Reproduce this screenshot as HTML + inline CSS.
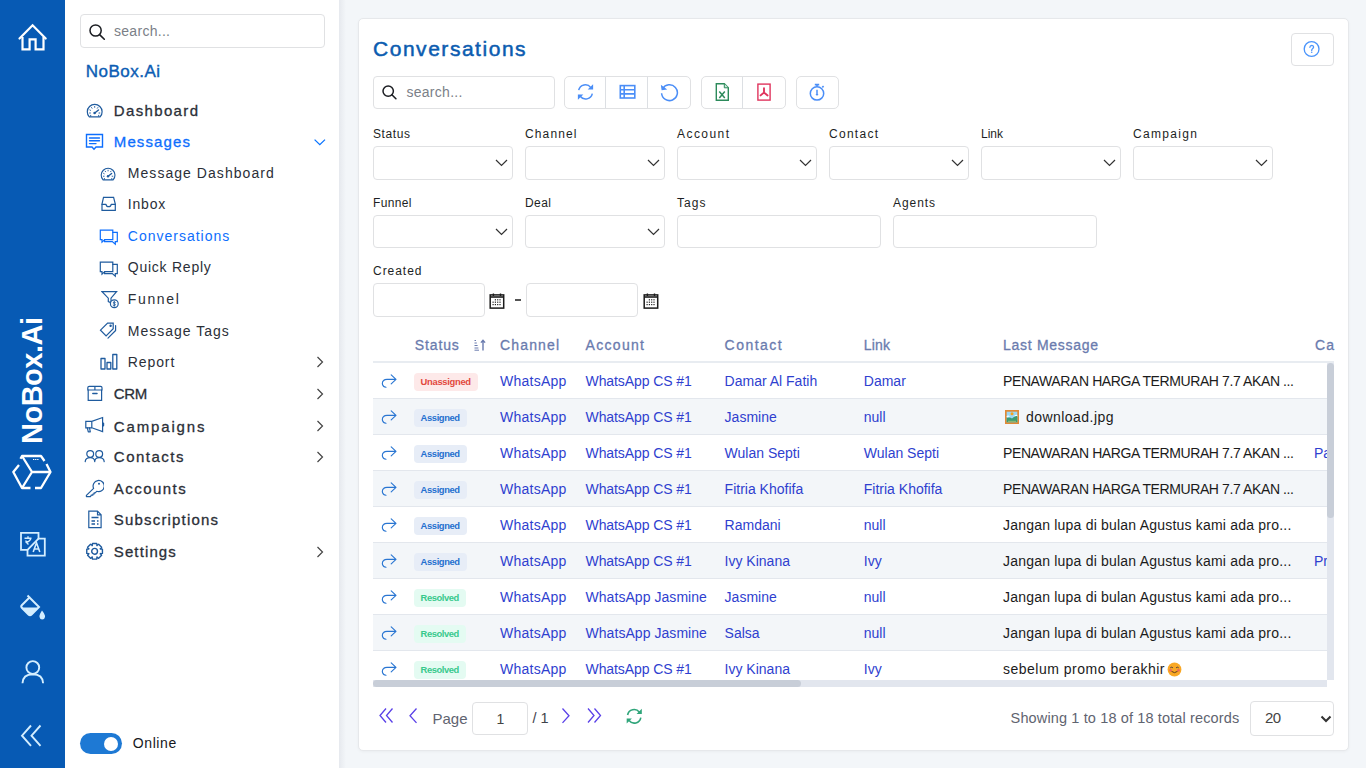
<!DOCTYPE html>
<html><head><meta charset="utf-8"><title>Conversations</title>
<style>
html,body{margin:0;padding:0;}
body{width:1366px;height:768px;overflow:hidden;position:relative;background:#f3f6f9;font-family:"Liberation Sans",sans-serif;}
.a{position:absolute;display:block;}
.t{position:absolute;white-space:pre;font-family:"Liberation Sans",sans-serif;}
</style></head><body>
<div class="a" style="left:0px;top:0px;width:65px;height:768px;box-sizing:border-box;border-radius:0px;background:#075ab4;"></div>
<div class="a" style="left:65px;top:0px;width:274px;height:768px;box-sizing:border-box;border-radius:0px;background:#fff;"></div>
<div class="a" style="left:339px;top:0;width:7px;height:768px;background:linear-gradient(90deg,#e6e9ee,#f3f6f9)"></div>
<div class="a" style="left:358px;top:18px;width:991px;height:733px;box-sizing:border-box;border:1px solid #e6e8eb;border-radius:5px;background:#fff;box-shadow:0 1px 3px rgba(0,0,0,0.04)"></div>
<div class="a" style="left:80px;top:14px;width:245px;height:34px;box-sizing:border-box;border:1px solid #e0e1e3;border-radius:4px;background:#fff;"></div>
<div class="t" style="left:114.00px;top:23.65px;font-size:14px;line-height:14px;color:#7b7f88;font-weight:400;letter-spacing:0.287px;">search...</div>
<div class="t" style="left:85.80px;top:63.31px;font-size:17px;line-height:17px;color:#0c5db4;font-weight:400;letter-spacing:0.475px;-webkit-text-stroke:0.4px #0c5db4">NoBox.Ai</div>
<div class="t" style="left:113.80px;top:103.40px;font-size:15px;line-height:15px;color:#2b2f38;font-weight:400;letter-spacing:1.351px;-webkit-text-stroke:0.3px #2b2f38">Dashboard</div>
<div class="t" style="left:113.80px;top:134.20px;font-size:15px;line-height:15px;color:#0d6efd;font-weight:400;letter-spacing:1.118px;-webkit-text-stroke:0.3px #0d6efd">Messages</div>
<svg class="a" style="left:312px;top:137.9px;" width="14" height="8" viewBox="0 0 14 8"><path d="M2.6 1.6 L7.8 6.6 L13 1.6" fill="none" stroke="#0a74ff" stroke-width="1.3"/></svg>
<div class="t" style="left:127.80px;top:166.45px;font-size:14px;line-height:14px;color:#2b2f38;font-weight:400;letter-spacing:1.045px;">Message Dashboard</div>
<div class="t" style="left:127.80px;top:197.35px;font-size:14px;line-height:14px;color:#2b2f38;font-weight:400;letter-spacing:0.812px;">Inbox</div>
<div class="t" style="left:127.80px;top:228.65px;font-size:14px;line-height:14px;color:#0d6efd;font-weight:400;letter-spacing:1.000px;">Conversations</div>
<div class="t" style="left:127.80px;top:260.05px;font-size:14px;line-height:14px;color:#2b2f38;font-weight:400;letter-spacing:0.753px;">Quick Reply</div>
<div class="t" style="left:127.80px;top:292.25px;font-size:14px;line-height:14px;color:#2b2f38;font-weight:400;letter-spacing:1.637px;">Funnel</div>
<div class="t" style="left:127.80px;top:323.55px;font-size:14px;line-height:14px;color:#2b2f38;font-weight:400;letter-spacing:0.999px;">Message Tags</div>
<div class="t" style="left:127.80px;top:355.15px;font-size:14px;line-height:14px;color:#2b2f38;font-weight:400;letter-spacing:0.894px;">Report</div>
<svg class="a" style="left:315px;top:356px;" width="10" height="12" viewBox="0 0 10 12"><path d="M2.5 1 L7.5 6 L2.5 11" fill="none" stroke="#444" stroke-width="1.2"/></svg>
<div class="t" style="left:113.80px;top:386.30px;font-size:15px;line-height:15px;color:#2b2f38;font-weight:400;letter-spacing:-0.336px;-webkit-text-stroke:0.3px #2b2f38">CRM</div>
<svg class="a" style="left:315px;top:388px;" width="10" height="12" viewBox="0 0 10 12"><path d="M2.5 1 L7.5 6 L2.5 11" fill="none" stroke="#444" stroke-width="1.2"/></svg>
<div class="t" style="left:113.80px;top:418.50px;font-size:15px;line-height:15px;color:#2b2f38;font-weight:400;letter-spacing:1.853px;-webkit-text-stroke:0.3px #2b2f38">Campaigns</div>
<svg class="a" style="left:315px;top:420.2px;" width="10" height="12" viewBox="0 0 10 12"><path d="M2.5 1 L7.5 6 L2.5 11" fill="none" stroke="#444" stroke-width="1.2"/></svg>
<div class="t" style="left:113.80px;top:449.20px;font-size:15px;line-height:15px;color:#2b2f38;font-weight:400;letter-spacing:1.500px;-webkit-text-stroke:0.3px #2b2f38">Contacts</div>
<svg class="a" style="left:315px;top:450.9px;" width="10" height="12" viewBox="0 0 10 12"><path d="M2.5 1 L7.5 6 L2.5 11" fill="none" stroke="#444" stroke-width="1.2"/></svg>
<div class="t" style="left:113.80px;top:481.00px;font-size:15px;line-height:15px;color:#2b2f38;font-weight:400;letter-spacing:1.457px;-webkit-text-stroke:0.3px #2b2f38">Accounts</div>
<div class="t" style="left:113.80px;top:511.90px;font-size:15px;line-height:15px;color:#2b2f38;font-weight:400;letter-spacing:1.179px;-webkit-text-stroke:0.3px #2b2f38">Subscriptions</div>
<div class="t" style="left:113.80px;top:544.20px;font-size:15px;line-height:15px;color:#2b2f38;font-weight:400;letter-spacing:1.114px;-webkit-text-stroke:0.3px #2b2f38">Settings</div>
<svg class="a" style="left:315px;top:545.9px;" width="10" height="12" viewBox="0 0 10 12"><path d="M2.5 1 L7.5 6 L2.5 11" fill="none" stroke="#444" stroke-width="1.2"/></svg>
<div class="a" style="left:80px;top:733px;width:42px;height:21px;border-radius:11px;background:#1e79d4"></div>
<div class="a" style="left:104px;top:737px;width:14px;height:14px;border-radius:7px;background:#fff"></div>
<div class="t" style="left:132.80px;top:736.15px;font-size:14px;line-height:14px;color:#16181d;font-weight:400;letter-spacing:0.586px;">Online</div>
<div class="t" style="left:373.00px;top:38.02px;font-size:21px;line-height:21px;color:#0b5cb0;font-weight:400;letter-spacing:1.530px;-webkit-text-stroke:0.5px #0b5cb0">Conversations</div>
<div class="a" style="left:1291px;top:33px;width:43px;height:33px;box-sizing:border-box;border:1px solid #e0e1e3;border-radius:4px;background:#fff;"></div>
<div class="a" style="left:373px;top:76px;width:182px;height:33px;box-sizing:border-box;border:1px solid #e0e1e3;border-radius:4px;background:#fff;"></div>
<div class="t" style="left:406.40px;top:85.45px;font-size:14px;line-height:14px;color:#7b7f88;font-weight:400;letter-spacing:0.287px;">search...</div>
<div class="a" style="left:564px;top:76px;width:127px;height:33px;box-sizing:border-box;border:1px solid #e0e1e3;border-radius:5px;background:#fff;"></div>
<div class="a" style="left:605px;top:77px;width:1px;height:31px;background:#dcdfe3"></div>
<div class="a" style="left:647px;top:77px;width:1px;height:31px;background:#dcdfe3"></div>
<div class="a" style="left:701px;top:76px;width:85px;height:33px;box-sizing:border-box;border:1px solid #e0e1e3;border-radius:5px;background:#fff;"></div>
<div class="a" style="left:742px;top:77px;width:1px;height:31px;background:#dcdfe3"></div>
<div class="a" style="left:796px;top:76px;width:43px;height:33px;box-sizing:border-box;border:1px solid #e0e1e3;border-radius:5px;background:#fff;"></div>
<div class="t" style="left:373.00px;top:128.04px;font-size:12px;line-height:12px;color:#1d1f24;font-weight:400;letter-spacing:0.594px;">Status</div>
<div class="a" style="left:373px;top:146px;width:140px;height:34px;box-sizing:border-box;border:1px solid #e0e1e3;border-radius:4px;background:#fff;"></div>
<svg class="a" style="left:495px;top:159px;" width="13" height="8" viewBox="0 0 13 8"><path d="M1 1 L6.5 6.5 L12 1" fill="none" stroke="#333" stroke-width="1.2"/></svg>
<div class="t" style="left:525.00px;top:128.04px;font-size:12px;line-height:12px;color:#1d1f24;font-weight:400;letter-spacing:1.133px;">Channel</div>
<div class="a" style="left:525px;top:146px;width:140px;height:34px;box-sizing:border-box;border:1px solid #e0e1e3;border-radius:4px;background:#fff;"></div>
<svg class="a" style="left:647px;top:159px;" width="13" height="8" viewBox="0 0 13 8"><path d="M1 1 L6.5 6.5 L12 1" fill="none" stroke="#333" stroke-width="1.2"/></svg>
<div class="t" style="left:677.00px;top:128.04px;font-size:12px;line-height:12px;color:#1d1f24;font-weight:400;letter-spacing:1.440px;">Account</div>
<div class="a" style="left:677px;top:146px;width:140px;height:34px;box-sizing:border-box;border:1px solid #e0e1e3;border-radius:4px;background:#fff;"></div>
<svg class="a" style="left:799px;top:159px;" width="13" height="8" viewBox="0 0 13 8"><path d="M1 1 L6.5 6.5 L12 1" fill="none" stroke="#333" stroke-width="1.2"/></svg>
<div class="t" style="left:829.00px;top:128.04px;font-size:12px;line-height:12px;color:#1d1f24;font-weight:400;letter-spacing:1.273px;">Contact</div>
<div class="a" style="left:829px;top:146px;width:140px;height:34px;box-sizing:border-box;border:1px solid #e0e1e3;border-radius:4px;background:#fff;"></div>
<svg class="a" style="left:951px;top:159px;" width="13" height="8" viewBox="0 0 13 8"><path d="M1 1 L6.5 6.5 L12 1" fill="none" stroke="#333" stroke-width="1.2"/></svg>
<div class="t" style="left:981.00px;top:128.04px;font-size:12px;line-height:12px;color:#1d1f24;font-weight:400;letter-spacing:-0.005px;">Link</div>
<div class="a" style="left:981px;top:146px;width:140px;height:34px;box-sizing:border-box;border:1px solid #e0e1e3;border-radius:4px;background:#fff;"></div>
<svg class="a" style="left:1103px;top:159px;" width="13" height="8" viewBox="0 0 13 8"><path d="M1 1 L6.5 6.5 L12 1" fill="none" stroke="#333" stroke-width="1.2"/></svg>
<div class="t" style="left:1133.00px;top:128.04px;font-size:12px;line-height:12px;color:#1d1f24;font-weight:400;letter-spacing:1.328px;">Campaign</div>
<div class="a" style="left:1133px;top:146px;width:140px;height:34px;box-sizing:border-box;border:1px solid #e0e1e3;border-radius:4px;background:#fff;"></div>
<svg class="a" style="left:1255px;top:159px;" width="13" height="8" viewBox="0 0 13 8"><path d="M1 1 L6.5 6.5 L12 1" fill="none" stroke="#333" stroke-width="1.2"/></svg>
<div class="t" style="left:373.00px;top:196.84px;font-size:12px;line-height:12px;color:#1d1f24;font-weight:400;letter-spacing:0.359px;">Funnel</div>
<div class="t" style="left:525.00px;top:196.84px;font-size:12px;line-height:12px;color:#1d1f24;font-weight:400;letter-spacing:0.438px;">Deal</div>
<div class="t" style="left:677.00px;top:196.84px;font-size:12px;line-height:12px;color:#1d1f24;font-weight:400;letter-spacing:1.047px;">Tags</div>
<div class="t" style="left:893.00px;top:196.84px;font-size:12px;line-height:12px;color:#1d1f24;font-weight:400;letter-spacing:0.928px;">Agents</div>
<div class="a" style="left:373px;top:215px;width:140px;height:33px;box-sizing:border-box;border:1px solid #e0e1e3;border-radius:4px;background:#fff;"></div>
<svg class="a" style="left:495px;top:228px;" width="13" height="8" viewBox="0 0 13 8"><path d="M1 1 L6.5 6.5 L12 1" fill="none" stroke="#333" stroke-width="1.2"/></svg>
<div class="a" style="left:525px;top:215px;width:140px;height:33px;box-sizing:border-box;border:1px solid #e0e1e3;border-radius:4px;background:#fff;"></div>
<svg class="a" style="left:647px;top:228px;" width="13" height="8" viewBox="0 0 13 8"><path d="M1 1 L6.5 6.5 L12 1" fill="none" stroke="#333" stroke-width="1.2"/></svg>
<div class="a" style="left:677px;top:215px;width:204px;height:33px;box-sizing:border-box;border:1px solid #e0e1e3;border-radius:4px;background:#fff;"></div>
<div class="a" style="left:893px;top:215px;width:204px;height:33px;box-sizing:border-box;border:1px solid #e0e1e3;border-radius:4px;background:#fff;"></div>
<div class="t" style="left:373.00px;top:264.54px;font-size:12px;line-height:12px;color:#1d1f24;font-weight:400;letter-spacing:0.966px;">Created</div>
<div class="a" style="left:373px;top:283px;width:112px;height:34px;box-sizing:border-box;border:1px solid #e0e1e3;border-radius:4px;background:#fff;"></div>
<div class="a" style="left:526px;top:283px;width:112px;height:34px;box-sizing:border-box;border:1px solid #e0e1e3;border-radius:4px;background:#fff;"></div>
<div class="a" style="left:515px;top:299px;width:6px;height:1.5px;background:#555"></div>
<div class="t" style="left:414.70px;top:338.25px;font-size:14px;line-height:14px;color:#6a7bae;font-weight:400;letter-spacing:0.899px;-webkit-text-stroke:0.3px #6a7bae">Status</div>
<div class="t" style="left:500.10px;top:338.25px;font-size:14px;line-height:14px;color:#6a7bae;font-weight:400;letter-spacing:1.124px;-webkit-text-stroke:0.3px #6a7bae">Channel</div>
<div class="t" style="left:585.50px;top:338.25px;font-size:14px;line-height:14px;color:#6a7bae;font-weight:400;letter-spacing:1.318px;-webkit-text-stroke:0.3px #6a7bae">Account</div>
<div class="t" style="left:724.60px;top:338.25px;font-size:14px;line-height:14px;color:#6a7bae;font-weight:400;letter-spacing:1.458px;-webkit-text-stroke:0.3px #6a7bae">Contact</div>
<div class="t" style="left:863.80px;top:338.25px;font-size:14px;line-height:14px;color:#6a7bae;font-weight:400;letter-spacing:0.138px;-webkit-text-stroke:0.3px #6a7bae">Link</div>
<div class="t" style="left:1003.00px;top:338.25px;font-size:14px;line-height:14px;color:#6a7bae;font-weight:400;letter-spacing:0.712px;-webkit-text-stroke:0.3px #6a7bae">Last Message</div>
<div class="t" style="left:1315.00px;top:338.25px;font-size:14px;line-height:14px;color:#6a7bae;font-weight:400;letter-spacing:1.094px;-webkit-text-stroke:0.3px #6a7bae">Ca</div>
<div class="a" style="left:373px;top:361px;width:961px;height:2px;background:#e8ecf1"></div>
<div class="a" style="left:373px;top:363px;width:954px;height:317px;overflow:hidden">
<div class="a" style="left:0;top:0px;width:954px;height:35px;background:#fff"></div>
<div class="a" style="left:0;top:35px;width:954px;height:1px;background:#e3e7ed"></div>
<svg class="a" style="left:7.5px;top:10.5px;" width="16" height="14" viewBox="0 0 16 14"><path d="M5 13.2 C1.2 13 0.4 8.6 2.6 6.5 C3.6 5.5 4.6 5.3 6 5.3 L15 5.3 M10.2 0.8 L15 5.3 L10.2 9.8" fill="none" stroke="#2a76d2" stroke-width="1.15" stroke-linecap="round" stroke-linejoin="round"/></svg>
<div class="a" style="left:41px;top:10px;width:64px;height:18px;border-radius:4px;background:#fde9e9"></div>
<div class="t" style="left:47.60px;top:13.84px;font-size:9.4px;line-height:9.4px;color:#e2483d;font-weight:700;letter-spacing:-0.293px;">Unassigned</div>
<div class="t" style="left:127.10px;top:10.95px;font-size:14px;line-height:14px;color:#2f3fcf;font-weight:400;letter-spacing:0.244px;">WhatsApp</div>
<div class="t" style="left:212.50px;top:10.95px;font-size:14px;line-height:14px;color:#2f3fcf;font-weight:400;letter-spacing:-0.084px;">WhatsApp CS #1</div>
<div class="t" style="left:351.60px;top:10.95px;font-size:14px;line-height:14px;color:#2f3fcf;font-weight:400;letter-spacing:0.000px;">Damar Al Fatih</div>
<div class="t" style="left:490.80px;top:10.95px;font-size:14px;line-height:14px;color:#2f3fcf;font-weight:400;letter-spacing:0.000px;">Damar</div>
<div class="t" style="left:630.00px;top:10.95px;font-size:14px;line-height:14px;color:#1b1b1b;font-weight:400;letter-spacing:-0.395px;">PENAWARAN HARGA TERMURAH 7.7 AKAN ...</div>
<div class="a" style="left:0;top:36px;width:954px;height:35px;background:#f3f6f9"></div>
<div class="a" style="left:0;top:71px;width:954px;height:1px;background:#e3e7ed"></div>
<svg class="a" style="left:7.5px;top:46.5px;" width="16" height="14" viewBox="0 0 16 14"><path d="M5 13.2 C1.2 13 0.4 8.6 2.6 6.5 C3.6 5.5 4.6 5.3 6 5.3 L15 5.3 M10.2 0.8 L15 5.3 L10.2 9.8" fill="none" stroke="#2a76d2" stroke-width="1.15" stroke-linecap="round" stroke-linejoin="round"/></svg>
<div class="a" style="left:41px;top:46px;width:52.5px;height:18px;border-radius:4px;background:#e7edf7"></div>
<div class="t" style="left:47.60px;top:49.84px;font-size:9.4px;line-height:9.4px;color:#2470cf;font-weight:700;letter-spacing:-0.386px;">Assigned</div>
<div class="t" style="left:127.10px;top:46.95px;font-size:14px;line-height:14px;color:#2f3fcf;font-weight:400;letter-spacing:0.244px;">WhatsApp</div>
<div class="t" style="left:212.50px;top:46.95px;font-size:14px;line-height:14px;color:#2f3fcf;font-weight:400;letter-spacing:-0.084px;">WhatsApp CS #1</div>
<div class="t" style="left:351.60px;top:46.95px;font-size:14px;line-height:14px;color:#2f3fcf;font-weight:400;letter-spacing:0.000px;">Jasmine</div>
<div class="t" style="left:490.80px;top:46.95px;font-size:14px;line-height:14px;color:#2f3fcf;font-weight:400;letter-spacing:0.000px;">null</div>
<svg class="a" style="left:632px;top:47px;" width="14" height="14" viewBox="0 0 14 14"><rect x="0" y="0" width="14" height="14" fill="#e08a35"/><rect x="1.7" y="1.7" width="10.6" height="10.6" fill="#9ad8f5"/><path d="M1.7 6 Q3.5 5 5 6.5 L1.7 7 Z M8.5 6.5 Q11 4 12.3 5 V7 Z" fill="#fff"/><path d="M1.7 12.3 V8 Q5 7 7 8.6 Q9.5 6 12.3 5.8 V12.3 Z" fill="#3c9c72"/><path d="M3 11.3 H11" stroke="#b8c878" stroke-width="0.8"/><circle cx="7" cy="3.8" r="1.5" fill="#f7a21b"/></svg>
<div class="t" style="left:653.00px;top:46.95px;font-size:14px;line-height:14px;color:#1b1b1b;font-weight:400;letter-spacing:0.453px;">download.jpg</div>
<div class="a" style="left:0;top:72px;width:954px;height:35px;background:#fff"></div>
<div class="a" style="left:0;top:107px;width:954px;height:1px;background:#e3e7ed"></div>
<svg class="a" style="left:7.5px;top:82.5px;" width="16" height="14" viewBox="0 0 16 14"><path d="M5 13.2 C1.2 13 0.4 8.6 2.6 6.5 C3.6 5.5 4.6 5.3 6 5.3 L15 5.3 M10.2 0.8 L15 5.3 L10.2 9.8" fill="none" stroke="#2a76d2" stroke-width="1.15" stroke-linecap="round" stroke-linejoin="round"/></svg>
<div class="a" style="left:41px;top:82px;width:52.5px;height:18px;border-radius:4px;background:#e7edf7"></div>
<div class="t" style="left:47.60px;top:85.84px;font-size:9.4px;line-height:9.4px;color:#2470cf;font-weight:700;letter-spacing:-0.386px;">Assigned</div>
<div class="t" style="left:127.10px;top:82.95px;font-size:14px;line-height:14px;color:#2f3fcf;font-weight:400;letter-spacing:0.244px;">WhatsApp</div>
<div class="t" style="left:212.50px;top:82.95px;font-size:14px;line-height:14px;color:#2f3fcf;font-weight:400;letter-spacing:-0.084px;">WhatsApp CS #1</div>
<div class="t" style="left:351.60px;top:82.95px;font-size:14px;line-height:14px;color:#2f3fcf;font-weight:400;letter-spacing:0.000px;">Wulan Septi</div>
<div class="t" style="left:490.80px;top:82.95px;font-size:14px;line-height:14px;color:#2f3fcf;font-weight:400;letter-spacing:0.000px;">Wulan Septi</div>
<div class="t" style="left:630.00px;top:82.95px;font-size:14px;line-height:14px;color:#1b1b1b;font-weight:400;letter-spacing:-0.395px;">PENAWARAN HARGA TERMURAH 7.7 AKAN ...</div>
<div class="t" style="left:941.00px;top:82.95px;font-size:14px;line-height:14px;color:#2f3fcf;font-weight:400;letter-spacing:0.000px;">Pa</div>
<div class="a" style="left:0;top:108px;width:954px;height:35px;background:#f3f6f9"></div>
<div class="a" style="left:0;top:143px;width:954px;height:1px;background:#e3e7ed"></div>
<svg class="a" style="left:7.5px;top:118.5px;" width="16" height="14" viewBox="0 0 16 14"><path d="M5 13.2 C1.2 13 0.4 8.6 2.6 6.5 C3.6 5.5 4.6 5.3 6 5.3 L15 5.3 M10.2 0.8 L15 5.3 L10.2 9.8" fill="none" stroke="#2a76d2" stroke-width="1.15" stroke-linecap="round" stroke-linejoin="round"/></svg>
<div class="a" style="left:41px;top:118px;width:52.5px;height:18px;border-radius:4px;background:#e7edf7"></div>
<div class="t" style="left:47.60px;top:121.84px;font-size:9.4px;line-height:9.4px;color:#2470cf;font-weight:700;letter-spacing:-0.386px;">Assigned</div>
<div class="t" style="left:127.10px;top:118.95px;font-size:14px;line-height:14px;color:#2f3fcf;font-weight:400;letter-spacing:0.244px;">WhatsApp</div>
<div class="t" style="left:212.50px;top:118.95px;font-size:14px;line-height:14px;color:#2f3fcf;font-weight:400;letter-spacing:-0.084px;">WhatsApp CS #1</div>
<div class="t" style="left:351.60px;top:118.95px;font-size:14px;line-height:14px;color:#2f3fcf;font-weight:400;letter-spacing:0.000px;">Fitria Khofifa</div>
<div class="t" style="left:490.80px;top:118.95px;font-size:14px;line-height:14px;color:#2f3fcf;font-weight:400;letter-spacing:0.000px;">Fitria Khofifa</div>
<div class="t" style="left:630.00px;top:118.95px;font-size:14px;line-height:14px;color:#1b1b1b;font-weight:400;letter-spacing:-0.395px;">PENAWARAN HARGA TERMURAH 7.7 AKAN ...</div>
<div class="a" style="left:0;top:144px;width:954px;height:35px;background:#fff"></div>
<div class="a" style="left:0;top:179px;width:954px;height:1px;background:#e3e7ed"></div>
<svg class="a" style="left:7.5px;top:154.5px;" width="16" height="14" viewBox="0 0 16 14"><path d="M5 13.2 C1.2 13 0.4 8.6 2.6 6.5 C3.6 5.5 4.6 5.3 6 5.3 L15 5.3 M10.2 0.8 L15 5.3 L10.2 9.8" fill="none" stroke="#2a76d2" stroke-width="1.15" stroke-linecap="round" stroke-linejoin="round"/></svg>
<div class="a" style="left:41px;top:154px;width:52.5px;height:18px;border-radius:4px;background:#e7edf7"></div>
<div class="t" style="left:47.60px;top:157.84px;font-size:9.4px;line-height:9.4px;color:#2470cf;font-weight:700;letter-spacing:-0.386px;">Assigned</div>
<div class="t" style="left:127.10px;top:154.95px;font-size:14px;line-height:14px;color:#2f3fcf;font-weight:400;letter-spacing:0.244px;">WhatsApp</div>
<div class="t" style="left:212.50px;top:154.95px;font-size:14px;line-height:14px;color:#2f3fcf;font-weight:400;letter-spacing:-0.084px;">WhatsApp CS #1</div>
<div class="t" style="left:351.60px;top:154.95px;font-size:14px;line-height:14px;color:#2f3fcf;font-weight:400;letter-spacing:0.000px;">Ramdani</div>
<div class="t" style="left:490.80px;top:154.95px;font-size:14px;line-height:14px;color:#2f3fcf;font-weight:400;letter-spacing:0.000px;">null</div>
<div class="t" style="left:630.00px;top:154.95px;font-size:14px;line-height:14px;color:#1b1b1b;font-weight:400;letter-spacing:0.206px;">Jangan lupa di bulan Agustus kami ada pro...</div>
<div class="a" style="left:0;top:180px;width:954px;height:35px;background:#f3f6f9"></div>
<div class="a" style="left:0;top:215px;width:954px;height:1px;background:#e3e7ed"></div>
<svg class="a" style="left:7.5px;top:190.5px;" width="16" height="14" viewBox="0 0 16 14"><path d="M5 13.2 C1.2 13 0.4 8.6 2.6 6.5 C3.6 5.5 4.6 5.3 6 5.3 L15 5.3 M10.2 0.8 L15 5.3 L10.2 9.8" fill="none" stroke="#2a76d2" stroke-width="1.15" stroke-linecap="round" stroke-linejoin="round"/></svg>
<div class="a" style="left:41px;top:190px;width:52.5px;height:18px;border-radius:4px;background:#e7edf7"></div>
<div class="t" style="left:47.60px;top:193.84px;font-size:9.4px;line-height:9.4px;color:#2470cf;font-weight:700;letter-spacing:-0.386px;">Assigned</div>
<div class="t" style="left:127.10px;top:190.95px;font-size:14px;line-height:14px;color:#2f3fcf;font-weight:400;letter-spacing:0.244px;">WhatsApp</div>
<div class="t" style="left:212.50px;top:190.95px;font-size:14px;line-height:14px;color:#2f3fcf;font-weight:400;letter-spacing:-0.084px;">WhatsApp CS #1</div>
<div class="t" style="left:351.60px;top:190.95px;font-size:14px;line-height:14px;color:#2f3fcf;font-weight:400;letter-spacing:0.000px;">Ivy Kinana</div>
<div class="t" style="left:490.80px;top:190.95px;font-size:14px;line-height:14px;color:#2f3fcf;font-weight:400;letter-spacing:0.000px;">Ivy</div>
<div class="t" style="left:630.00px;top:190.95px;font-size:14px;line-height:14px;color:#1b1b1b;font-weight:400;letter-spacing:0.206px;">Jangan lupa di bulan Agustus kami ada pro...</div>
<div class="t" style="left:941.00px;top:190.95px;font-size:14px;line-height:14px;color:#2f3fcf;font-weight:400;letter-spacing:0.000px;">Pr</div>
<div class="a" style="left:0;top:216px;width:954px;height:35px;background:#fff"></div>
<div class="a" style="left:0;top:251px;width:954px;height:1px;background:#e3e7ed"></div>
<svg class="a" style="left:7.5px;top:226.5px;" width="16" height="14" viewBox="0 0 16 14"><path d="M5 13.2 C1.2 13 0.4 8.6 2.6 6.5 C3.6 5.5 4.6 5.3 6 5.3 L15 5.3 M10.2 0.8 L15 5.3 L10.2 9.8" fill="none" stroke="#2a76d2" stroke-width="1.15" stroke-linecap="round" stroke-linejoin="round"/></svg>
<div class="a" style="left:41px;top:226px;width:52px;height:18px;border-radius:4px;background:#e4fbf2"></div>
<div class="t" style="left:47.60px;top:229.84px;font-size:9.4px;line-height:9.4px;color:#38c98c;font-weight:700;letter-spacing:-0.441px;">Resolved</div>
<div class="t" style="left:127.10px;top:226.95px;font-size:14px;line-height:14px;color:#2f3fcf;font-weight:400;letter-spacing:0.244px;">WhatsApp</div>
<div class="t" style="left:212.50px;top:226.95px;font-size:14px;line-height:14px;color:#2f3fcf;font-weight:400;letter-spacing:0.053px;">WhatsApp Jasmine</div>
<div class="t" style="left:351.60px;top:226.95px;font-size:14px;line-height:14px;color:#2f3fcf;font-weight:400;letter-spacing:0.000px;">Jasmine</div>
<div class="t" style="left:490.80px;top:226.95px;font-size:14px;line-height:14px;color:#2f3fcf;font-weight:400;letter-spacing:0.000px;">null</div>
<div class="t" style="left:630.00px;top:226.95px;font-size:14px;line-height:14px;color:#1b1b1b;font-weight:400;letter-spacing:0.206px;">Jangan lupa di bulan Agustus kami ada pro...</div>
<div class="a" style="left:0;top:252px;width:954px;height:35px;background:#f3f6f9"></div>
<div class="a" style="left:0;top:287px;width:954px;height:1px;background:#e3e7ed"></div>
<svg class="a" style="left:7.5px;top:262.5px;" width="16" height="14" viewBox="0 0 16 14"><path d="M5 13.2 C1.2 13 0.4 8.6 2.6 6.5 C3.6 5.5 4.6 5.3 6 5.3 L15 5.3 M10.2 0.8 L15 5.3 L10.2 9.8" fill="none" stroke="#2a76d2" stroke-width="1.15" stroke-linecap="round" stroke-linejoin="round"/></svg>
<div class="a" style="left:41px;top:262px;width:52px;height:18px;border-radius:4px;background:#e4fbf2"></div>
<div class="t" style="left:47.60px;top:265.84px;font-size:9.4px;line-height:9.4px;color:#38c98c;font-weight:700;letter-spacing:-0.441px;">Resolved</div>
<div class="t" style="left:127.10px;top:262.95px;font-size:14px;line-height:14px;color:#2f3fcf;font-weight:400;letter-spacing:0.244px;">WhatsApp</div>
<div class="t" style="left:212.50px;top:262.95px;font-size:14px;line-height:14px;color:#2f3fcf;font-weight:400;letter-spacing:0.053px;">WhatsApp Jasmine</div>
<div class="t" style="left:351.60px;top:262.95px;font-size:14px;line-height:14px;color:#2f3fcf;font-weight:400;letter-spacing:0.000px;">Salsa</div>
<div class="t" style="left:490.80px;top:262.95px;font-size:14px;line-height:14px;color:#2f3fcf;font-weight:400;letter-spacing:0.000px;">null</div>
<div class="t" style="left:630.00px;top:262.95px;font-size:14px;line-height:14px;color:#1b1b1b;font-weight:400;letter-spacing:0.206px;">Jangan lupa di bulan Agustus kami ada pro...</div>
<div class="a" style="left:0;top:288px;width:954px;height:35px;background:#fff"></div>
<div class="a" style="left:0;top:323px;width:954px;height:1px;background:#e3e7ed"></div>
<svg class="a" style="left:7.5px;top:298.5px;" width="16" height="14" viewBox="0 0 16 14"><path d="M5 13.2 C1.2 13 0.4 8.6 2.6 6.5 C3.6 5.5 4.6 5.3 6 5.3 L15 5.3 M10.2 0.8 L15 5.3 L10.2 9.8" fill="none" stroke="#2a76d2" stroke-width="1.15" stroke-linecap="round" stroke-linejoin="round"/></svg>
<div class="a" style="left:41px;top:298px;width:52px;height:18px;border-radius:4px;background:#e4fbf2"></div>
<div class="t" style="left:47.60px;top:301.84px;font-size:9.4px;line-height:9.4px;color:#38c98c;font-weight:700;letter-spacing:-0.441px;">Resolved</div>
<div class="t" style="left:127.10px;top:298.95px;font-size:14px;line-height:14px;color:#2f3fcf;font-weight:400;letter-spacing:0.244px;">WhatsApp</div>
<div class="t" style="left:212.50px;top:298.95px;font-size:14px;line-height:14px;color:#2f3fcf;font-weight:400;letter-spacing:-0.084px;">WhatsApp CS #1</div>
<div class="t" style="left:351.60px;top:298.95px;font-size:14px;line-height:14px;color:#2f3fcf;font-weight:400;letter-spacing:0.000px;">Ivy Kinana</div>
<div class="t" style="left:490.80px;top:298.95px;font-size:14px;line-height:14px;color:#2f3fcf;font-weight:400;letter-spacing:0.000px;">Ivy</div>
<div class="t" style="left:630.00px;top:298.95px;font-size:14px;line-height:14px;color:#1b1b1b;font-weight:400;letter-spacing:0.501px;">sebelum promo berakhir</div>
<svg class="a" style="left:794px;top:298.5px;" width="15" height="15" viewBox="0 0 15 15"><circle cx="7.5" cy="7.5" r="6.9" fill="#f9a825"/><path d="M4.4 9.3 Q7.5 12 10.6 9.3" fill="none" stroke="#5a3a20" stroke-width="1"/><path d="M3.3 5.8 Q4.6 4.6 5.9 5.8 M9.1 5.8 Q10.4 4.6 11.7 5.8" fill="none" stroke="#4a3a40" stroke-width="1"/><circle cx="3.6" cy="8.3" r="1.4" fill="#ee6a5a"/><circle cx="11.4" cy="8.3" r="1.4" fill="#ee6a5a"/></svg>
</div>
<div class="a" style="left:1327px;top:363px;width:7px;height:317px;background:#e2e6ee"></div>
<div class="a" style="left:1327px;top:363px;width:7px;height:155px;border-radius:3.5px;background:#c8ced8"></div>
<div class="a" style="left:373px;top:680px;width:954px;height:7px;background:#e2e6ee"></div>
<div class="a" style="left:373px;top:680px;width:428px;height:7px;border-radius:3.5px;background:#c8ced8"></div>
<div class="t" style="left:432.40px;top:710.70px;font-size:15px;line-height:15px;color:#5f6470;font-weight:400;letter-spacing:0.051px;">Page</div>
<div class="a" style="left:472px;top:702px;width:56px;height:33px;box-sizing:border-box;border:1px solid #e0e1e3;border-radius:4px;background:#fff;"></div>
<div class="t" style="left:496.50px;top:711.55px;font-size:14px;line-height:14px;color:#444;font-weight:400;letter-spacing:0.000px;">1</div>
<div class="t" style="left:532.40px;top:711.12px;font-size:14.5px;line-height:14.5px;color:#3e424a;font-weight:400;letter-spacing:0.000px;">/ 1</div>
<div class="t" style="left:1010.60px;top:710.92px;font-size:14.5px;line-height:14.5px;color:#5f6470;font-weight:400;letter-spacing:0.133px;">Showing 1 to 18 of 18 total records</div>
<div class="a" style="left:1250px;top:701px;width:84px;height:35px;box-sizing:border-box;border:1px solid #e0e1e3;border-radius:4px;background:#fff;"></div>
<div class="t" style="left:1265.00px;top:710.30px;font-size:15px;line-height:15px;color:#444;font-weight:400;letter-spacing:-0.688px;">20</div>
<svg class="a" style="left:1320px;top:715px;" width="12" height="8" viewBox="0 0 12 8"><path d="M1.5 1.5 L6 6 L10.5 1.5" fill="none" stroke="#333" stroke-width="2"/></svg>
<svg class="a" style="left:17px;top:23px;" width="32" height="30" viewBox="0 0 32 30"><path d="M2.5 15.5 L15.6 2.3 L28.7 15.5" fill="none" stroke="#fff" stroke-width="2.2" stroke-linecap="round" stroke-linejoin="miter"/><path d="M5.5 14 L5.5 26.3 L12.6 26.3 L12.6 16.3 L18.6 16.3 L18.6 26.3 L26.5 26.3 L26.5 14" fill="none" stroke="#fff" stroke-width="2.2"/></svg>
<div class="t" style="left:-29px;top:367.5px;width:122px;height:30px;line-height:30px;font-size:29px;font-weight:700;color:#fff;transform:rotate(-90deg);transform-origin:50% 50%;text-align:center;letter-spacing:-0.5px">NoBox.Ai</div>
<svg class="a" style="left:11px;top:453px;" width="42" height="38" viewBox="0 0 42 38"><g fill="none" stroke="#fff" stroke-width="2.3" stroke-linejoin="round"><path d="M8 12 L2.3 19 L11 35 L19.5 35"/><path d="M24 35 L30 35 L39.5 19 L35.5 11"/><path d="M33.5 8 L30 3 L11 3 L9.5 5.8"/><path d="M11 3 L21 19 L39.5 19 M21 19 L11 35"/></g><path d="M22 6.5 H28" stroke="#fff" stroke-width="1.2" stroke-dasharray="1.3 0.8"/></svg>
<svg class="a" style="left:19px;top:531px;" width="28" height="27" viewBox="0 0 28 27"><g fill="none" stroke="#d4eeff" stroke-width="1.8" stroke-linejoin="miter"><path d="M8.5 18.8 L2 18.8 L2 1.9 L19.5 1.9 L19.5 7.6 L25.8 7.6 L25.8 24.6 L8.5 24.6 Z"/><path d="M8.5 18.8 L19.5 7.6"/></g><path d="M5.5 7.3 H12.5 M9 5.3 V7.3 M6.3 9.8 Q9.5 12.5 12 7.5 M9.5 13.5 L6.5 10.5" stroke="#d4eeff" stroke-width="1.4" fill="none"/><path d="M14.2 21 L17.5 11.8 L20.8 21 M15.3 18 H19.7" stroke="#d4eeff" stroke-width="1.6" fill="none"/></svg>
<svg class="a" style="left:18px;top:593px;" width="30" height="29" viewBox="0 0 30 29"><path d="M9.5 2.5 L11.5 4.5 L4 12 Q2.5 13.5 4 15 L10.5 21.5 Q12 23 13.5 21.5 L21 14 L11.5 4.5" fill="none" stroke="#d4eeff" stroke-width="2"/><path d="M3.5 14.5 L21 14.5 L13.5 22 Q12 23.3 10.5 22 Z" fill="#d4eeff"/><path d="M24 17.5 Q21 22 21.5 24 Q22 26.5 24.2 26.5 Q26.5 26.5 27 24 Q27.5 22 24 17.5 Z" fill="#d4eeff"/></svg>
<svg class="a" style="left:20px;top:658px;" width="26" height="28" viewBox="0 0 26 28"><circle cx="12.8" cy="9.5" r="6.4" fill="none" stroke="#d4eeff" stroke-width="1.9"/><path d="M2.5 25.3 Q2.8 16.5 12.8 16.3 Q22.8 16.5 23.1 25.3" fill="none" stroke="#d4eeff" stroke-width="1.9"/></svg>
<svg class="a" style="left:19px;top:723px;" width="24" height="26" viewBox="0 0 24 26"><path d="M12 2.5 L3 12.7 L12 22.8 M21.5 2.5 L12.5 12.7 L21.5 22.8" fill="none" stroke="#d4eeff" stroke-width="1.9"/></svg>
<svg class="a" style="left:86px;top:102px;" width="18" height="17" viewBox="0 0 18 17"><g fill="none" stroke="#1f5b9e" stroke-width="1.2" stroke-linecap="round" stroke-linejoin="round"><g transform="scale(1.0)"><path d="M3.3 14.9 A7.4 7.4 0 1 1 14.1 14.9 Z" stroke-linejoin="round"/><path d="M8.7 4.5 V5.3 M5.6 5.6 L6 6.2 M11.8 5.6 L11.4 6.2 M3.9 8 L4.5 8.3 M3.6 11 H4.4 M13.8 11 H13 M4.7 13.3 V14.2 M12.7 13.3 V14.2" stroke-width="1"/><path d="M8.7 11 L12.5 8" stroke-width="1.4"/><circle cx="8.6" cy="11" r="1.3" fill="#1f5b9e" stroke="none"/></g></g></svg>
<svg class="a" style="left:85px;top:133px;" width="19" height="18" viewBox="0 0 19 18"><g fill="none" stroke="#0d6efd" stroke-width="1.4" stroke-linecap="round" stroke-linejoin="round"><path d="M1.5 1.5 H17.5 V14 H11 L9 16.2 L7 14 H1.5 Z" stroke-linejoin="miter"/><path d="M4.5 5 H14.5 M4.5 7.8 H14.5 M4.5 10.6 H11"/></g></svg>
<svg class="a" style="left:100px;top:166px;" width="18" height="17" viewBox="0 0 18 17"><g fill="none" stroke="#1f5b9e" stroke-width="1.2" stroke-linecap="round" stroke-linejoin="round"><g transform="scale(0.93)"><path d="M3.3 14.9 A7.4 7.4 0 1 1 14.1 14.9 Z" stroke-linejoin="round"/><path d="M8.7 4.5 V5.3 M5.6 5.6 L6 6.2 M11.8 5.6 L11.4 6.2 M3.9 8 L4.5 8.3 M3.6 11 H4.4 M13.8 11 H13 M4.7 13.3 V14.2 M12.7 13.3 V14.2" stroke-width="1"/><path d="M8.7 11 L12.5 8" stroke-width="1.4"/><circle cx="8.6" cy="11" r="1.3" fill="#1f5b9e" stroke="none"/></g></g></svg>
<svg class="a" style="left:101px;top:196px;" width="16" height="16" viewBox="0 0 16 16"><g fill="none" stroke="#1f5b9e" stroke-width="1.2" stroke-linecap="round" stroke-linejoin="round"><path d="M2.5 1.4 H12.6 L14.3 8 V14.4 H1 V8 Z" stroke-linejoin="miter"/><path d="M1 8.3 H5 Q5.4 10.7 7.6 10.7 Q9.8 10.7 10.2 8.3 H14.3"/></g></svg>
<svg class="a" style="left:99px;top:229px;" width="20" height="17" viewBox="0 0 20 17"><g fill="none" stroke="#0d6efd" stroke-width="1.2" stroke-linecap="round" stroke-linejoin="round"><path d="M1.3 1.2 H13.8 V10.6 H5.8 L3 13.1 V10.6 H1.3 Z" stroke-linejoin="miter"/><path d="M13.8 3.4 H18.3 V12.6 H16.3 V15.2 L13.3 12.6 H5.6 V10.6" stroke-linejoin="miter"/></g></svg>
<svg class="a" style="left:99px;top:260.5px;" width="20" height="17" viewBox="0 0 20 17"><g fill="none" stroke="#1f5b9e" stroke-width="1.2" stroke-linecap="round" stroke-linejoin="round"><path d="M1.3 1.2 H13.8 V10.6 H5.8 L3 13.1 V10.6 H1.3 Z" stroke-linejoin="miter"/><path d="M13.8 3.4 H18.3 V12.6 H16.3 V15.2 L13.3 12.6 H5.6 V10.6" stroke-linejoin="miter"/></g></svg>
<svg class="a" style="left:101px;top:290px;" width="20" height="19" viewBox="0 0 20 19"><g fill="none" stroke="#1f5b9e" stroke-width="1.2" stroke-linecap="round" stroke-linejoin="round"><path d="M1 1.6 H15.6 L10 8.2 V12.8 L7.3 11.6 V8.2 Z" stroke-linejoin="miter"/><circle cx="13.3" cy="13.8" r="3.9" fill="#fff"/><path d="M14.3 12.4 Q13.3 11.7 12.4 12.3 Q11.8 13.2 13.3 13.7 Q14.8 14.2 14.2 15.2 Q13.3 15.9 12.2 15.2 M13.3 11.3 V16.3" stroke-width="0.9"/></g></svg>
<svg class="a" style="left:99px;top:321px;" width="20" height="19" viewBox="0 0 20 19"><g fill="none" stroke="#1f5b9e" stroke-width="1.2" stroke-linecap="round" stroke-linejoin="round"><path d="M1.5 9.2 L8.6 2.1 H14.2 V7.7 L7.1 14.8 Z" stroke-linejoin="miter"/><circle cx="11.6" cy="4.7" r="0.6" fill="#1f5b9e"/><path d="M16.6 4.5 V9.5 L9 17.1"/></g></svg>
<svg class="a" style="left:100px;top:353px;" width="19" height="17" viewBox="0 0 19 17"><g fill="none" stroke="#1f5b9e" stroke-width="1.3" stroke-linecap="round" stroke-linejoin="round"><rect x="1" y="5.5" width="4" height="10.5"/><rect x="7" y="9.5" width="3.8" height="6.5"/><rect x="12.8" y="1.5" width="4" height="14.5"/></g></svg>
<svg class="a" style="left:86px;top:385px;" width="18" height="17" viewBox="0 0 18 17"><g fill="none" stroke="#1f5b9e" stroke-width="1.2" stroke-linecap="round" stroke-linejoin="round"><path d="M2.2 5.2 V15.4 H15.6 V5.2" stroke-linejoin="miter"/><path d="M1.8 5 V2.8 Q1.8 1.4 3.2 1.4 H14.6 Q16 1.4 16 2.8 V5 Z M8.9 1.4 V5" stroke-linejoin="miter"/><path d="M6.8 8.4 H11" stroke-width="1.5"/></g></svg>
<svg class="a" style="left:84px;top:416px;" width="21" height="17" viewBox="0 0 21 17"><g fill="none" stroke="#1f5b9e" stroke-width="1.2" stroke-linecap="round" stroke-linejoin="round"><path d="M1.8 5.4 H7.8 L18.6 1.5 V15.6 L7.8 11.8 H1.8 Z M7.8 5.4 V11.8" stroke-linejoin="miter"/><path d="M3.3 11.8 L4.3 15.8 H6.3 L5.5 11.8"/><path d="M19.3 7.5 V9.5" stroke-width="1.8"/></g></svg>
<svg class="a" style="left:84px;top:449px;" width="22" height="14" viewBox="0 0 22 14"><g fill="none" stroke="#1f5b9e" stroke-width="1.2" stroke-linecap="round" stroke-linejoin="round"><circle cx="6.2" cy="5" r="3.4"/><circle cx="15.2" cy="5" r="3.4"/><path d="M1.2 12.6 Q1.5 8.6 6.2 8.6 Q10.7 8.6 10.7 12.6 M10.7 12.6 Q10.9 8.6 15.2 8.6 Q19.9 8.6 20.2 12.6"/></g></svg>
<svg class="a" style="left:85px;top:478px;" width="19" height="20" viewBox="0 0 19 20"><g fill="none" stroke="#1f5b9e" stroke-width="1.2" stroke-linecap="round" stroke-linejoin="round"><path d="M8.6 10.4 A5.6 5.6 0 1 1 11.7 13.3 L10.2 14.8 L9.1 14.8 L9.1 16 L7.9 16 L7.9 17.1 L6.3 17.1 L5.6 18.6 L1.4 18.6 L1.4 17.4 Z" stroke-linejoin="round"/><circle cx="14" cy="5.8" r="1" fill="#1f5b9e" stroke="none"/></g></svg>
<svg class="a" style="left:87px;top:510px;" width="16" height="19" viewBox="0 0 16 19"><g fill="none" stroke="#1f5b9e" stroke-width="1.2" stroke-linecap="round" stroke-linejoin="round"><path d="M1.8 1.2 H10.5 L14.1 4.8 V17.6 H1.8 Z M10.5 1.2 V4.8 H14.1" stroke-linejoin="miter"/><path d="M4.5 7.6 H11.5 M4.5 10.9 H8 M10 10.9 H11.5 M4.5 14 H8 M10 14 H11.5" stroke-width="1.5" stroke-linecap="butt"/></g></svg>
<svg class="a" style="left:85px;top:542px;" width="19" height="19" viewBox="0 0 19 19"><g fill="none" stroke="#1f5b9e" stroke-width="1.4" stroke-linecap="round" stroke-linejoin="round"><path d="M17.43 7.22 L17.43 11.38 L15.26 11.83 L15.39 11.52 L16.61 13.36 L13.66 16.31 L11.82 15.09 L12.13 14.96 L11.68 17.13 L7.52 17.13 L7.07 14.96 L7.38 15.09 L5.54 16.31 L2.59 13.36 L3.81 11.52 L3.94 11.83 L1.77 11.38 L1.77 7.22 L3.94 6.77 L3.81 7.08 L2.59 5.24 L5.54 2.29 L7.38 3.51 L7.07 3.64 L7.52 1.47 L11.68 1.47 L12.13 3.64 L11.82 3.51 L13.66 2.29 L16.61 5.24 L15.39 7.08 L15.26 6.77 Z" stroke-linejoin="round"/><circle cx="9.6" cy="9.3" r="2.9"/></g></svg>
<svg class="a" style="left:88px;top:23px;" width="18" height="18" viewBox="0 0 18 18"><circle cx="7.6" cy="7.5" r="5.6" fill="none" stroke="#1b1d22" stroke-width="1.5"/><path d="M11.6 11.6 L16.3 16.2" stroke="#1b1d22" stroke-width="1.6" stroke-linecap="round"/></svg>
<svg class="a" style="left:381px;top:84px;" width="17" height="17" viewBox="0 0 17 17"><circle cx="7.2" cy="7.1" r="5.2" fill="none" stroke="#1b1d22" stroke-width="1.5"/><path d="M10.9 10.8 L14.9 14.7" stroke="#1b1d22" stroke-width="1.6" stroke-linecap="round"/></svg>
<svg class="a" style="left:576px;top:82px;" width="19" height="20" viewBox="0 0 19 20"><g fill="none" stroke="#4b8ef7" stroke-width="1.5"><path d="M2.7 8.2 A6.8 6.8 0 0 1 14.8 5.6"/><path d="M16.3 11.6 A6.8 6.8 0 0 1 4.2 14.3"/></g><path d="M17.1 2.2 V7.6 H11.7 Z" fill="#4b8ef7"/><path d="M1.9 17.8 V12.4 H7.3 Z" fill="#4b8ef7"/></svg>
<svg class="a" style="left:618px;top:84px;" width="19" height="16" viewBox="0 0 19 16"><g fill="none" stroke="#4b8ef7" stroke-width="1.6"><rect x="2.3" y="1.6" width="14.5" height="12.4"/><path d="M2.3 5.8 H16.8 M2.3 9.9 H16.8 M6.2 1.6 V14"/></g></svg>
<svg class="a" style="left:659px;top:82px;" width="21" height="20" viewBox="0 0 21 20"><path d="M3.6 6.8 A7.9 7.9 0 1 1 2.6 11.2" fill="none" stroke="#4b8ef7" stroke-width="1.5"/><path d="M2.3 2.5 V8.2 H8 Z" fill="#4b8ef7" transform="rotate(-8 3 6)"/></svg>
<svg class="a" style="left:714px;top:82px;" width="17" height="20" viewBox="0 0 17 20"><path d="M2.3 1.8 H10.3 L14.3 5.8 V18.2 H2.3 Z" fill="none" stroke="#2c8a5b" stroke-width="1.4" stroke-linejoin="miter"/><path d="M10.3 1.8 V5.8 H14.3" fill="#c9e8d8" stroke="#2c8a5b" stroke-width="1"/><path d="M5.3 9.5 L10.8 16 M10.8 9.5 L5.3 16" stroke="#2c8a5b" stroke-width="1.5"/></svg>
<svg class="a" style="left:756px;top:82px;" width="16" height="20" viewBox="0 0 16 20"><rect x="1.9" y="2.1" width="12.2" height="16" fill="none" stroke="#e0355e" stroke-width="1.4"/><path d="M8 6.2 V10.4 M8 10.4 L4.6 13.4 M8 10.4 L11.6 13.4" stroke="#e0355e" stroke-width="1.9" stroke-linecap="round"/></svg>
<svg class="a" style="left:808px;top:82px;" width="18" height="20" viewBox="0 0 18 20"><circle cx="9" cy="11.4" r="6.7" fill="none" stroke="#4b8ef7" stroke-width="1.5"/><path d="M6.8 2.6 H11.2 M9 2.6 V4.6 M14.3 5.4 L15.6 4.1" stroke="#4b8ef7" stroke-width="1.6"/><path d="M9 7.8 V12.6" stroke="#4b8ef7" stroke-width="1.5"/><path d="M7.5 12 L9 14 L10.5 12 Z" fill="#4b8ef7"/></svg>
<svg class="a" style="left:1303px;top:40px;" width="18" height="18" viewBox="0 0 18 18"><circle cx="8.6" cy="9" r="7.4" fill="none" stroke="#4a94fb" stroke-width="1.3"/><path d="M6.9 7.3 Q7 5.4 8.8 5.4 Q10.6 5.5 10.6 7.1 Q10.6 8.1 9.5 8.7 Q8.7 9.2 8.7 10.4" fill="none" stroke="#4a94fb" stroke-width="1.3" stroke-linecap="round"/><circle cx="8.7" cy="12.3" r="0.8" fill="#4a94fb"/></svg>
<svg class="a" style="left:489px;top:292px;" width="16" height="17" viewBox="0 0 16 17"><rect x="1.2" y="2.9" width="13.5" height="13.2" fill="none" stroke="#1b1b1b" stroke-width="1.5"/><path d="M1.2 5 H14.7" stroke="#1b1b1b" stroke-width="1.6"/><path d="M4.4 1.5 V4 M11.5 1.5 V4" stroke="#1b1b1b" stroke-width="1.4"/><rect x="5.8" y="7.2" width="1.2" height="1.2" fill="#222"/><rect x="8.1" y="7.2" width="1.2" height="1.2" fill="#222"/><rect x="10.399999999999999" y="7.2" width="1.2" height="1.2" fill="#222"/><rect x="3.5" y="9.6" width="1.2" height="1.2" fill="#222"/><rect x="5.8" y="9.6" width="1.2" height="1.2" fill="#222"/><rect x="8.1" y="9.6" width="1.2" height="1.2" fill="#222"/><rect x="10.399999999999999" y="9.6" width="1.2" height="1.2" fill="#222"/><rect x="3.5" y="12.0" width="1.2" height="1.2" fill="#222"/><rect x="5.8" y="12.0" width="1.2" height="1.2" fill="#222"/><rect x="8.1" y="12.0" width="1.2" height="1.2" fill="#222"/><rect x="10.399999999999999" y="12.0" width="1.2" height="1.2" fill="#222"/></svg>
<svg class="a" style="left:643px;top:292px;" width="16" height="17" viewBox="0 0 16 17"><rect x="1.2" y="2.9" width="13.5" height="13.2" fill="none" stroke="#1b1b1b" stroke-width="1.5"/><path d="M1.2 5 H14.7" stroke="#1b1b1b" stroke-width="1.6"/><path d="M4.4 1.5 V4 M11.5 1.5 V4" stroke="#1b1b1b" stroke-width="1.4"/><rect x="5.8" y="7.2" width="1.2" height="1.2" fill="#222"/><rect x="8.1" y="7.2" width="1.2" height="1.2" fill="#222"/><rect x="10.399999999999999" y="7.2" width="1.2" height="1.2" fill="#222"/><rect x="3.5" y="9.6" width="1.2" height="1.2" fill="#222"/><rect x="5.8" y="9.6" width="1.2" height="1.2" fill="#222"/><rect x="8.1" y="9.6" width="1.2" height="1.2" fill="#222"/><rect x="10.399999999999999" y="9.6" width="1.2" height="1.2" fill="#222"/><rect x="3.5" y="12.0" width="1.2" height="1.2" fill="#222"/><rect x="5.8" y="12.0" width="1.2" height="1.2" fill="#222"/><rect x="8.1" y="12.0" width="1.2" height="1.2" fill="#222"/><rect x="10.399999999999999" y="12.0" width="1.2" height="1.2" fill="#222"/></svg>
<svg class="a" style="left:473px;top:338px;" width="14" height="14" viewBox="0 0 14 14"><g stroke="#6a7bae" stroke-width="1"><path d="M1.5 2.5 H3 M1.5 5 H3.8 M1.5 7.5 H4.6 M1.5 10 H5.4 M1.5 12.2 H6"/></g><path d="M10 12.4 V2.4 M7.9 4.6 L10 2.2 L12.1 4.6" fill="none" stroke="#6a7bae" stroke-width="1.4"/></svg>
<svg class="a" style="left:377px;top:706px;" width="18" height="20" viewBox="0 0 18 20"><path d="M9 2.5 L3 9.5 L9 16.5 M15.5 2.5 L9.5 9.5 L15.5 16.5" fill="none" stroke="#5a41e8" stroke-width="1.3"/></svg>
<svg class="a" style="left:406px;top:706px;" width="14" height="20" viewBox="0 0 14 20"><path d="M10.5 2.5 L4 9.7 L10.5 16.9" fill="none" stroke="#5a41e8" stroke-width="1.3"/></svg>
<svg class="a" style="left:559px;top:706px;" width="14" height="20" viewBox="0 0 14 20"><path d="M3.5 2.5 L10 9.7 L3.5 16.9" fill="none" stroke="#5a41e8" stroke-width="1.3"/></svg>
<svg class="a" style="left:585px;top:706px;" width="18" height="20" viewBox="0 0 18 20"><path d="M3 2.5 L9 9.5 L3 16.5 M9.5 2.5 L15.5 9.5 L9.5 16.5" fill="none" stroke="#5a41e8" stroke-width="1.3"/></svg>
<svg class="a" style="left:625px;top:707px;" width="19" height="19" viewBox="0 0 19 19"><g fill="none" stroke="#2fa57a" stroke-width="1.6"><path d="M2.6 8 A6.6 6.6 0 0 1 14.4 5.2"/><path d="M15.8 10.6 A6.6 6.6 0 0 1 4.1 13.6"/></g><path d="M16.8 1.8 V7 H11.6 Z" fill="#2fa57a"/><path d="M1.7 16.6 V11.4 H6.9 Z" fill="#2fa57a"/></svg>
</body></html>
